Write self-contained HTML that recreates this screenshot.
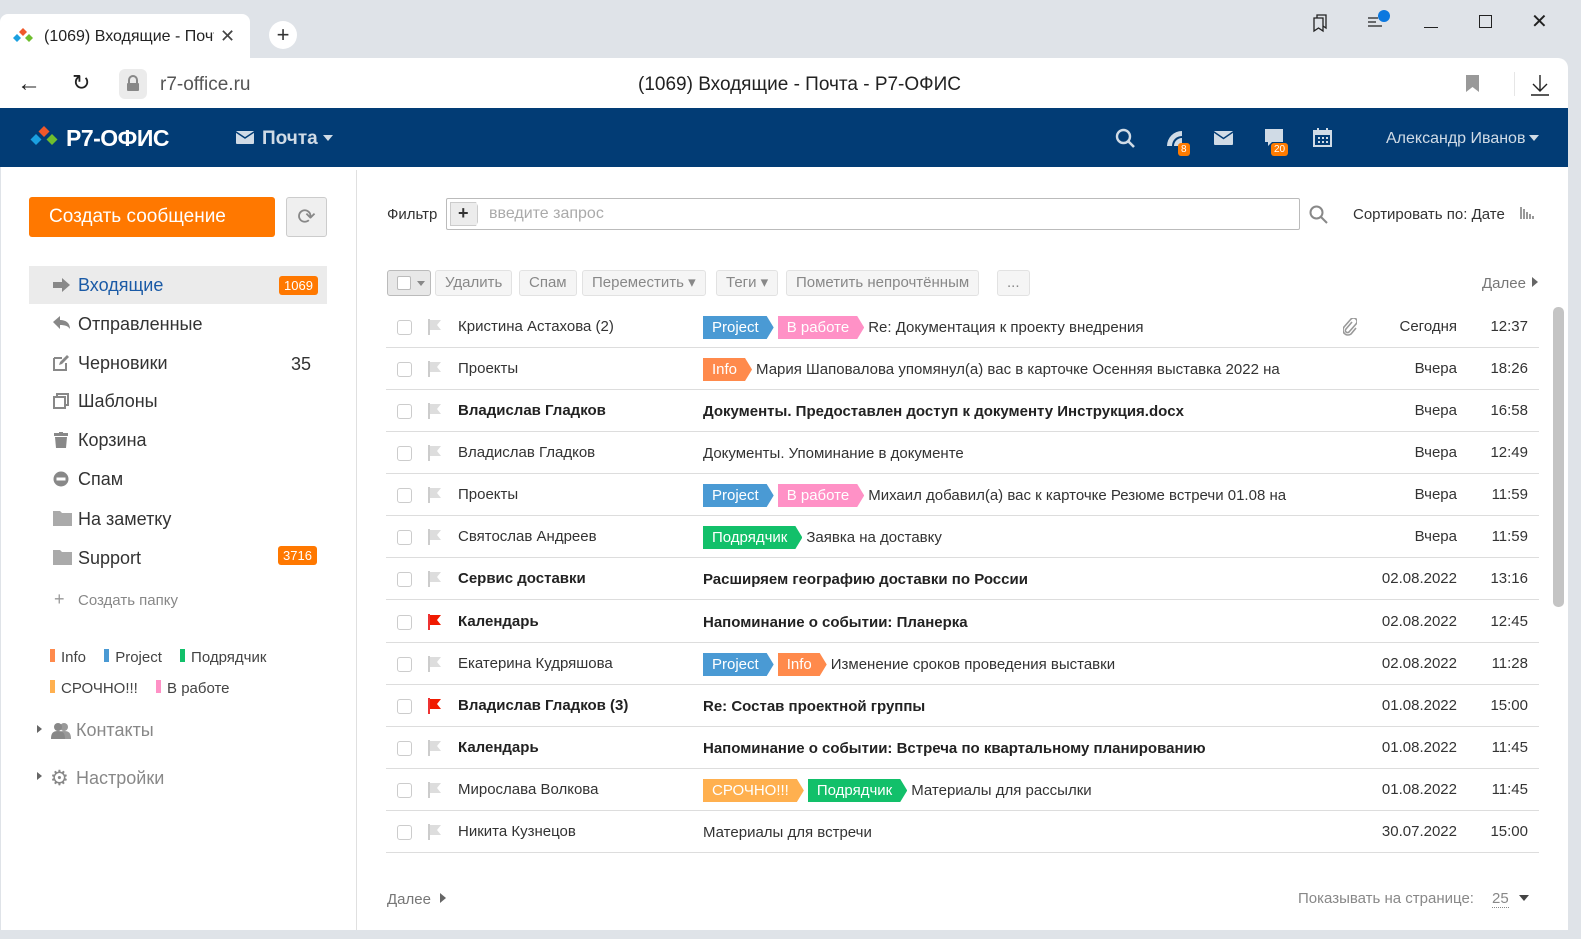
<!DOCTYPE html>
<html><head><meta charset="utf-8"><style>
*{margin:0;padding:0;box-sizing:border-box}
html{width:1581px;height:939px;overflow:hidden}
body{width:1581px;height:939px;overflow:hidden;background:#dfe3e8;font-family:"Liberation Sans","Noto Sans CJK SC",sans-serif;position:relative;color:#333}
.a{position:absolute;white-space:nowrap}
.tab{left:0;top:14px;width:250px;height:46px;background:#fff;border-radius:8px 8px 0 0}
.addr{left:0;top:58px;width:1568px;height:52px;background:#fff;border-radius:0 10px 0 0}
.hdr{left:0;top:108px;width:1568px;height:59px;background:#023c75}
.main{left:1px;top:167px;width:1567px;height:763px;background:#fff}
.ni{font-size:18px;color:#333}
.row{position:absolute;left:386px;width:1153px;height:42px;border-bottom:1px solid #ddd;font-size:15px;color:#333}
.row .cb{position:absolute;left:11px;top:14px;width:15px;height:15px;border:1px solid #ccc;border-radius:3px;background:#fff}
.row .fl{position:absolute;left:42px;top:13px}
.row .s{position:absolute;left:72px;top:12px}
.row .sub{position:absolute;left:317px;top:10px;line-height:23px;display:flex;align-items:center}
.row .d{position:absolute;right:82px;top:12px}
.row .t{position:absolute;right:11px;top:12px}
.b{font-weight:bold;color:#222}
.tag{display:inline-block;height:23px;line-height:23px;color:#fff;padding:0 15px 0 9px;margin-right:4px;clip-path:polygon(0 0,calc(100% - 7px) 0,100% 50%,calc(100% - 7px) 100%,0 100%)}
.P{background:#4a9ad4}.W{background:#ff91c6}.I{background:#ff8a4c}.G{background:#12c06a}.U{background:#ffb04f}
.btn{position:absolute;top:270px;height:26px;border:1px solid #e2e2e2;background:#f5f5f5;border-radius:3px;color:#888;font-size:15px;line-height:24px;padding:0 9px}
</style></head><body>
<div class="a tab"></div>
<svg class="a" style="left:12px;top:27px" width="22" height="18" viewBox="0 0 22 18"><path d="M11 1l4 4-4 4-4-4z" fill="#f0582a"/><path d="M5 7l4 4-4 4-4-4z" fill="#1ba0e0"/><path d="M17 7l4 4-4 4-4-4z" fill="#6fbe2e"/></svg>
<div class="a" style="left:44px;top:28px;font-size:16px;color:#222;width:170px;overflow:hidden">(1069) Входящие - Почта</div>
<div class="a" style="left:220px;top:26px;font-size:18px;color:#444">✕</div>
<div class="a" style="left:269px;top:21px;width:28px;height:28px;border-radius:50%;background:#fff;text-align:center;font-size:22px;line-height:27px;color:#333">+</div>
<svg class="a" style="left:1310px;top:12px" width="22" height="22" viewBox="0 0 22 22" fill="none" stroke="#222" stroke-width="1.3"><path d="M4 6h9v13l-4.5-3-4.5 3z"/><path d="M7 6V3h9v13l-3-2"/></svg>
<svg class="a" style="left:1366px;top:8px" width="26" height="22"><path d="M2 10h10M2 14h8M2 18h14" stroke="#222" stroke-width="1.3"/><circle cx="18" cy="8" r="6" fill="#0b78df"/></svg>
<div class="a" style="left:1424px;top:27px;width:14px;height:1px;background:#222"></div>
<div class="a" style="left:1479px;top:15px;width:13px;height:13px;border:1.3px solid #222"></div>
<div class="a" style="left:1531px;top:9px;font-size:20px;color:#222">✕</div>
<div class="a addr"></div>
<div class="a" style="left:17px;top:70px;font-size:24px;color:#222">←</div>
<div class="a" style="left:72px;top:70px;font-size:22px;color:#222">↻</div>
<div class="a" style="left:119px;top:69px;width:28px;height:30px;background:#ebebeb;border-radius:6px"></div>
<svg class="a" style="left:126px;top:75px" width="14" height="17"><path d="M3 8V5a4 4 0 018 0v3" stroke="#888" stroke-width="2" fill="none"/><rect x="1" y="8" width="12" height="8" rx="1" fill="#888"/></svg>
<div class="a" style="left:160px;top:74px;font-size:19px;color:#555">r7-office.ru</div>
<div class="a" style="left:638px;top:74px;font-size:19px;color:#222">(1069) Входящие - Почта - Р7-ОФИС</div>
<svg class="a" style="left:1466px;top:75px" width="14" height="18"><path d="M0 0h13v17l-6.5-5-6.5 5z" fill="#999"/></svg>
<div class="a" style="left:1514px;top:72px;width:1px;height:24px;background:#e6e6e6"></div>
<svg class="a" style="left:1530px;top:74px" width="20" height="22"><path d="M10 1v16M3 10l7 7 7-7M1 21h18" stroke="#222" stroke-width="1.4" fill="none"/></svg>

<div class="a hdr"></div>
<svg class="a" style="left:28px;top:125px" width="32" height="24" viewBox="0 0 32 24"><path d="M16 1l5.5 5.5L16 12l-5.5-5.5z" fill="#f0582a"/><path d="M8 9l5.5 5.5L8 20l-5.5-5.5z" fill="#1ba0e0"/><path d="M24 9l5.5 5.5L24 20l-5.5-5.5z" fill="#6fbe2e"/></svg>
<div class="a" style="left:66px;top:125px;font-size:23px;font-weight:bold;color:#fff;letter-spacing:-0.5px">Р7-ОФИС</div>
<svg class="a" style="left:236px;top:131px" width="18" height="13"><rect width="18" height="13" rx="1" fill="#d0dbe6"/><path d="M0 1l9 6 9-6" stroke="#023c75" stroke-width="1.5" fill="none"/></svg>
<div class="a" style="left:262px;top:128px;font-size:19px;font-weight:bold;color:#d0dbe6">Почта</div>
<div class="a" style="left:323px;top:135px;border:5px solid transparent;border-top:6px solid #d0dbe6"></div>
<svg class="a" style="left:1115px;top:128px" width="22" height="22"><circle cx="8.5" cy="8.5" r="6.5" stroke="#d0dbe6" stroke-width="2.4" fill="none"/><path d="M13 13l6 6" stroke="#d0dbe6" stroke-width="2.6"/></svg>
<svg class="a" style="left:1165px;top:129px" width="20" height="18"><path d="M2 17A15 15 0 0117 2v5A10 10 0 007 17z" fill="#d0dbe6"/><path d="M9 17a8 8 0 018-8v8z" fill="#d0dbe6"/></svg>
<div class="a" style="left:1178px;top:143px;background:#ff7b00;color:#fff;font-size:10px;padding:0 3px;border-radius:3px;line-height:13px">8</div>
<svg class="a" style="left:1214px;top:131px" width="19" height="14"><rect width="19" height="14" rx="1" fill="#d0dbe6"/><path d="M0 1l9.5 6.5L19 1" stroke="#023c75" stroke-width="1.5" fill="none"/></svg>
<svg class="a" style="left:1264px;top:129px" width="20" height="19"><path d="M1 0h18v13H8l-4 4v-4H1z" fill="#d0dbe6"/></svg>
<div class="a" style="left:1271px;top:143px;background:#ff7b00;color:#fff;font-size:10px;padding:0 3px;border-radius:3px;line-height:13px">20</div>
<svg class="a" style="left:1313px;top:128px" width="19" height="19"><rect x="1" y="3" width="17" height="15" stroke="#d0dbe6" stroke-width="2" fill="none"/><rect x="1" y="3" width="17" height="4" fill="#d0dbe6"/><path d="M5 0v4M14 0v4" stroke="#d0dbe6" stroke-width="2"/><path d="M5 10h2M9 10h2M13 10h2M5 14h2M9 14h2M13 14h2" stroke="#d0dbe6" stroke-width="2"/></svg>
<div class="a" style="left:1386px;top:130px;font-size:16px;color:#d0dbe6">Александр Иванов</div>
<div class="a" style="left:1529px;top:135px;border:5px solid transparent;border-top:6px solid #d0dbe6"></div>

<div class="a main"></div>
<div class="a" style="left:356px;top:170px;width:1px;height:760px;background:#e0e0e0"></div>
<div class="a" style="left:29px;top:197px;width:246px;height:40px;background:#ff7800;border-radius:3px;color:#fff;font-size:19px;line-height:39px;padding-left:20px">Создать сообщение</div>
<div class="a" style="left:286px;top:197px;width:41px;height:40px;background:#efefef;border:1px solid #ccc;border-radius:3px;text-align:center;line-height:38px;font-size:22px;color:#888">⟳</div>
<div class="a" style="left:29px;top:266px;width:298px;height:38px;background:#ebebeb"></div>
<svg class="a" style="left:53px;top:278px" width="18" height="14"><path d="M0 4h9V0l8 7-8 7v-4H0z" fill="#888"/></svg>
<div class="a ni" style="left:78px;top:275px;color:#1a5aa6">Входящие</div>
<div class="a" style="left:279px;top:276px;background:#ff7800;color:#fff;font-size:13px;padding:0 5px;border-radius:3px;line-height:19px">1069</div>
<svg class="a" style="left:53px;top:316px" width="18" height="14"><path d="M7 0v4c6 0 10 3 10 9-2-3-5-4-10-4v4L0 6z" fill="#888"/></svg>
<div class="a ni" style="left:78px;top:314px">Отправленные</div>
<svg class="a" style="left:53px;top:355px" width="16" height="16"><path d="M1 3h8M1 3v12h12V8" stroke="#888" stroke-width="2" fill="none"/><path d="M6 10l1-3 7-7 2 2-7 7z" fill="#888"/></svg>
<div class="a ni" style="left:78px;top:353px">Черновики</div>
<div class="a ni" style="left:291px;top:354px">35</div>
<svg class="a" style="left:53px;top:393px" width="16" height="16"><rect x="4" y="1" width="11" height="11" stroke="#888" stroke-width="2" fill="none"/><rect x="1" y="4" width="11" height="11" stroke="#888" stroke-width="2" fill="#fff"/></svg>
<div class="a ni" style="left:78px;top:391px">Шаблоны</div>
<svg class="a" style="left:54px;top:432px" width="14" height="16"><rect x="0" y="1" width="14" height="3" fill="#888"/><rect x="5" y="0" width="4" height="2" fill="#888"/><path d="M1 5h12l-1 11H2z" fill="#888"/></svg>
<div class="a ni" style="left:78px;top:430px">Корзина</div>
<svg class="a" style="left:53px;top:471px" width="16" height="16"><circle cx="8" cy="8" r="7.5" fill="#888"/><rect x="3.5" y="6.5" width="9" height="3" fill="#fff"/></svg>
<div class="a ni" style="left:78px;top:469px">Спам</div>
<svg class="a" style="left:53px;top:511px" width="19" height="15"><path d="M0 0h7l2 2h10v13H0z" fill="#aaa"/></svg>
<div class="a ni" style="left:78px;top:509px">На заметку</div>
<svg class="a" style="left:53px;top:550px" width="19" height="15"><path d="M0 0h7l2 2h10v13H0z" fill="#aaa"/></svg>
<div class="a ni" style="left:78px;top:548px">Support</div>
<div class="a" style="left:278px;top:546px;background:#ff7800;color:#fff;font-size:13px;padding:0 5px;border-radius:3px;line-height:19px">3716</div>
<div class="a" style="left:54px;top:589px;font-size:18px;color:#999">+</div>
<div class="a" style="left:78px;top:592px;font-size:15px;color:#888">Создать папку</div>
<div class="a" style="left:50px;top:649px;font-size:15px;color:#444"><span style="display:inline-block;width:5px;height:13px;background:#ff8a4c;margin-right:6px"></span>Info <span style="display:inline-block;width:5px;height:13px;background:#4a9ad4;margin:0 6px 0 14px"></span>Project <span style="display:inline-block;width:5px;height:13px;background:#12c06a;margin:0 6px 0 14px"></span>Подрядчик</div>
<div class="a" style="left:50px;top:680px;font-size:15px;color:#444"><span style="display:inline-block;width:5px;height:13px;background:#ffb04f;margin-right:6px"></span>СРОЧНО!!! <span style="display:inline-block;width:5px;height:13px;background:#ff91c6;margin:0 6px 0 14px"></span>В работе</div>
<div class="a" style="left:37px;top:725px;border:4px solid transparent;border-left:5px solid #666"></div>
<svg class="a" style="left:51px;top:722px" width="20" height="17"><circle cx="13" cy="5" r="4" fill="#999"/><path d="M5 17c0-6 3-8 8-8s7 2 7 8z" fill="#999"/><circle cx="7" cy="5" r="4" fill="#888"/><path d="M0 17c0-6 2-8 7-8s7 2 7 8z" fill="#888"/></svg>
<div class="a" style="left:76px;top:720px;font-size:18px;color:#888">Контакты</div>
<div class="a" style="left:37px;top:772px;border:4px solid transparent;border-left:5px solid #666"></div>
<div class="a" style="left:50px;top:766px;font-size:21px;color:#888">⚙</div>
<div class="a" style="left:76px;top:768px;font-size:18px;color:#888">Настройки</div>

<div class="a" style="left:387px;top:206px;font-size:15px;color:#333">Фильтр</div>
<div class="a" style="left:446px;top:198px;width:854px;height:32px;border:1px solid #bbb;border-radius:2px"></div>
<div class="a" style="left:450px;top:202px;width:28px;height:24px;background:#ececec;border:1px solid #ccc;clip-path:polygon(0 0,26px 0,32px 50%,26px 100%,0 100%);font-size:18px;line-height:21px;padding-left:7px;font-weight:bold;color:#333">+</div>
<div class="a" style="left:489px;top:205px;font-size:16px;color:#aaa">введите запрос</div>
<svg class="a" style="left:1309px;top:205px" width="19" height="19"><circle cx="7.5" cy="7.5" r="6" stroke="#888" stroke-width="2" fill="none"/><path d="M12 12l6 6" stroke="#888" stroke-width="2"/></svg>
<div class="a" style="left:1353px;top:206px;font-size:15px;color:#333">Сортировать по: Дате</div>
<svg class="a" style="left:1520px;top:207px" width="14" height="12"><path d="M1 0v12M4 2v10M7 5v7M10 7v5M13 9v3" stroke="#999" stroke-width="2"/></svg>

<div class="a" style="left:387px;top:270px;width:44px;height:26px;border:1px solid #bbb;background:#e8e8e8;border-radius:3px"></div>
<div class="a" style="left:397px;top:276px;width:14px;height:14px;border:1px solid #bbb;background:#fff;border-radius:2px"></div>
<div class="a" style="left:417px;top:281px;border:4px solid transparent;border-top:5px solid #888"></div>
<div class="btn" style="left:435px">Удалить</div>
<div class="btn" style="left:519px">Спам</div>
<div class="btn" style="left:582px">Переместить ▾</div>
<div class="btn" style="left:716px">Теги ▾</div>
<div class="btn" style="left:786px">Пометить непрочтённым</div>
<div class="btn" style="left:997px">...</div>
<div class="a" style="left:1482px;top:275px;font-size:15px;color:#777">Далее</div>
<div class="a" style="left:1532px;top:277px;border:5px solid transparent;border-left:6px solid #666;border-right:0"></div>

<div class="row" style="top:306px"><i class="cb"></i><svg class="fl" width="14" height="16"><path d="M1 0v16" stroke="#ccc" stroke-width="2"/><path d="M2 1h11l-4 5 4 5H2z" fill="#ddd"/></svg><span class="s">Кристина Астахова (2)</span><span class="sub"><span class="tag P">Project</span><span class="tag W">В работе</span>Re: Документация к проекту внедрения</span><svg class="a" style="left:957px;top:12px" width="14" height="18" viewBox="0 0 14 18"><path d="M9 4l-6 7a2 2 0 003 3l7-8a3.5 3.5 0 00-5-5L1 9a5 5 0 007 7l5-6" stroke="#999" stroke-width="1.6" fill="none"/></svg><span class="d">Сегодня</span><span class="t">12:37</span></div>
<div class="row" style="top:348px"><i class="cb"></i><svg class="fl" width="14" height="16"><path d="M1 0v16" stroke="#ccc" stroke-width="2"/><path d="M2 1h11l-4 5 4 5H2z" fill="#ddd"/></svg><span class="s">Проекты</span><span class="sub"><span class="tag I">Info</span>Мария Шаповалова упомянул(а) вас в карточке Осенняя выставка 2022 на</span><span class="d">Вчера</span><span class="t">18:26</span></div>
<div class="row" style="top:390px"><i class="cb"></i><svg class="fl" width="14" height="16"><path d="M1 0v16" stroke="#ccc" stroke-width="2"/><path d="M2 1h11l-4 5 4 5H2z" fill="#ddd"/></svg><span class="s b">Владислав Гладков</span><span class="sub b">Документы. Предоставлен доступ к документу Инструкция.docx</span><span class="d">Вчера</span><span class="t">16:58</span></div>
<div class="row" style="top:432px"><i class="cb"></i><svg class="fl" width="14" height="16"><path d="M1 0v16" stroke="#ccc" stroke-width="2"/><path d="M2 1h11l-4 5 4 5H2z" fill="#ddd"/></svg><span class="s">Владислав Гладков</span><span class="sub">Документы. Упоминание в документе</span><span class="d">Вчера</span><span class="t">12:49</span></div>
<div class="row" style="top:474px"><i class="cb"></i><svg class="fl" width="14" height="16"><path d="M1 0v16" stroke="#ccc" stroke-width="2"/><path d="M2 1h11l-4 5 4 5H2z" fill="#ddd"/></svg><span class="s">Проекты</span><span class="sub"><span class="tag P">Project</span><span class="tag W">В работе</span>Михаил добавил(а) вас к карточке Резюме встречи 01.08 на</span><span class="d">Вчера</span><span class="t">11:59</span></div>
<div class="row" style="top:516px"><i class="cb"></i><svg class="fl" width="14" height="16"><path d="M1 0v16" stroke="#ccc" stroke-width="2"/><path d="M2 1h11l-4 5 4 5H2z" fill="#ddd"/></svg><span class="s">Святослав Андреев</span><span class="sub"><span class="tag G">Подрядчик</span>Заявка на доставку</span><span class="d">Вчера</span><span class="t">11:59</span></div>
<div class="row" style="top:558px"><i class="cb"></i><svg class="fl" width="14" height="16"><path d="M1 0v16" stroke="#ccc" stroke-width="2"/><path d="M2 1h11l-4 5 4 5H2z" fill="#ddd"/></svg><span class="s b">Сервис доставки</span><span class="sub b">Расширяем географию доставки по России</span><span class="d">02.08.2022</span><span class="t">13:16</span></div>
<div class="row" style="top:601px"><i class="cb"></i><svg class="fl" width="14" height="16"><path d="M1 0v16" stroke="#e33" stroke-width="2"/><path d="M2 1h11l-4 5 4 5H2z" fill="#f01a00"/></svg><span class="s b">Календарь</span><span class="sub b">Напоминание о событии: Планерка</span><span class="d">02.08.2022</span><span class="t">12:45</span></div>
<div class="row" style="top:643px"><i class="cb"></i><svg class="fl" width="14" height="16"><path d="M1 0v16" stroke="#ccc" stroke-width="2"/><path d="M2 1h11l-4 5 4 5H2z" fill="#ddd"/></svg><span class="s">Екатерина Кудряшова</span><span class="sub"><span class="tag P">Project</span><span class="tag I">Info</span>Изменение сроков проведения выставки</span><span class="d">02.08.2022</span><span class="t">11:28</span></div>
<div class="row" style="top:685px"><i class="cb"></i><svg class="fl" width="14" height="16"><path d="M1 0v16" stroke="#e33" stroke-width="2"/><path d="M2 1h11l-4 5 4 5H2z" fill="#f01a00"/></svg><span class="s b">Владислав Гладков (3)</span><span class="sub b">Re: Состав проектной группы</span><span class="d">01.08.2022</span><span class="t">15:00</span></div>
<div class="row" style="top:727px"><i class="cb"></i><svg class="fl" width="14" height="16"><path d="M1 0v16" stroke="#ccc" stroke-width="2"/><path d="M2 1h11l-4 5 4 5H2z" fill="#ddd"/></svg><span class="s b">Календарь</span><span class="sub b">Напоминание о событии: Встреча по квартальному планированию</span><span class="d">01.08.2022</span><span class="t">11:45</span></div>
<div class="row" style="top:769px"><i class="cb"></i><svg class="fl" width="14" height="16"><path d="M1 0v16" stroke="#ccc" stroke-width="2"/><path d="M2 1h11l-4 5 4 5H2z" fill="#ddd"/></svg><span class="s">Мирослава Волкова</span><span class="sub"><span class="tag U">СРОЧНО!!!</span><span class="tag G">Подрядчик</span>Материалы для рассылки</span><span class="d">01.08.2022</span><span class="t">11:45</span></div>
<div class="row" style="top:811px"><i class="cb"></i><svg class="fl" width="14" height="16"><path d="M1 0v16" stroke="#ccc" stroke-width="2"/><path d="M2 1h11l-4 5 4 5H2z" fill="#ddd"/></svg><span class="s">Никита Кузнецов</span><span class="sub">Материалы для встречи</span><span class="d">30.07.2022</span><span class="t">15:00</span></div>
<div class="a" style="left:1553px;top:307px;width:11px;height:300px;background:#c4c4c4;border-radius:5px"></div>
<div class="a" style="left:387px;top:891px;font-size:15px;color:#777">Далее</div>
<div class="a" style="left:440px;top:893px;border:5px solid transparent;border-left:6px solid #666;border-right:0"></div>
<div class="a" style="left:1298px;top:890px;font-size:15px;color:#888">Показывать на странице:</div>
<div class="a" style="left:1492px;top:890px;font-size:15px;color:#888;border-bottom:1px dotted #888">25</div>
<div class="a" style="left:1519px;top:895px;border:5px solid transparent;border-top:6px solid #444"></div>
</body></html>
